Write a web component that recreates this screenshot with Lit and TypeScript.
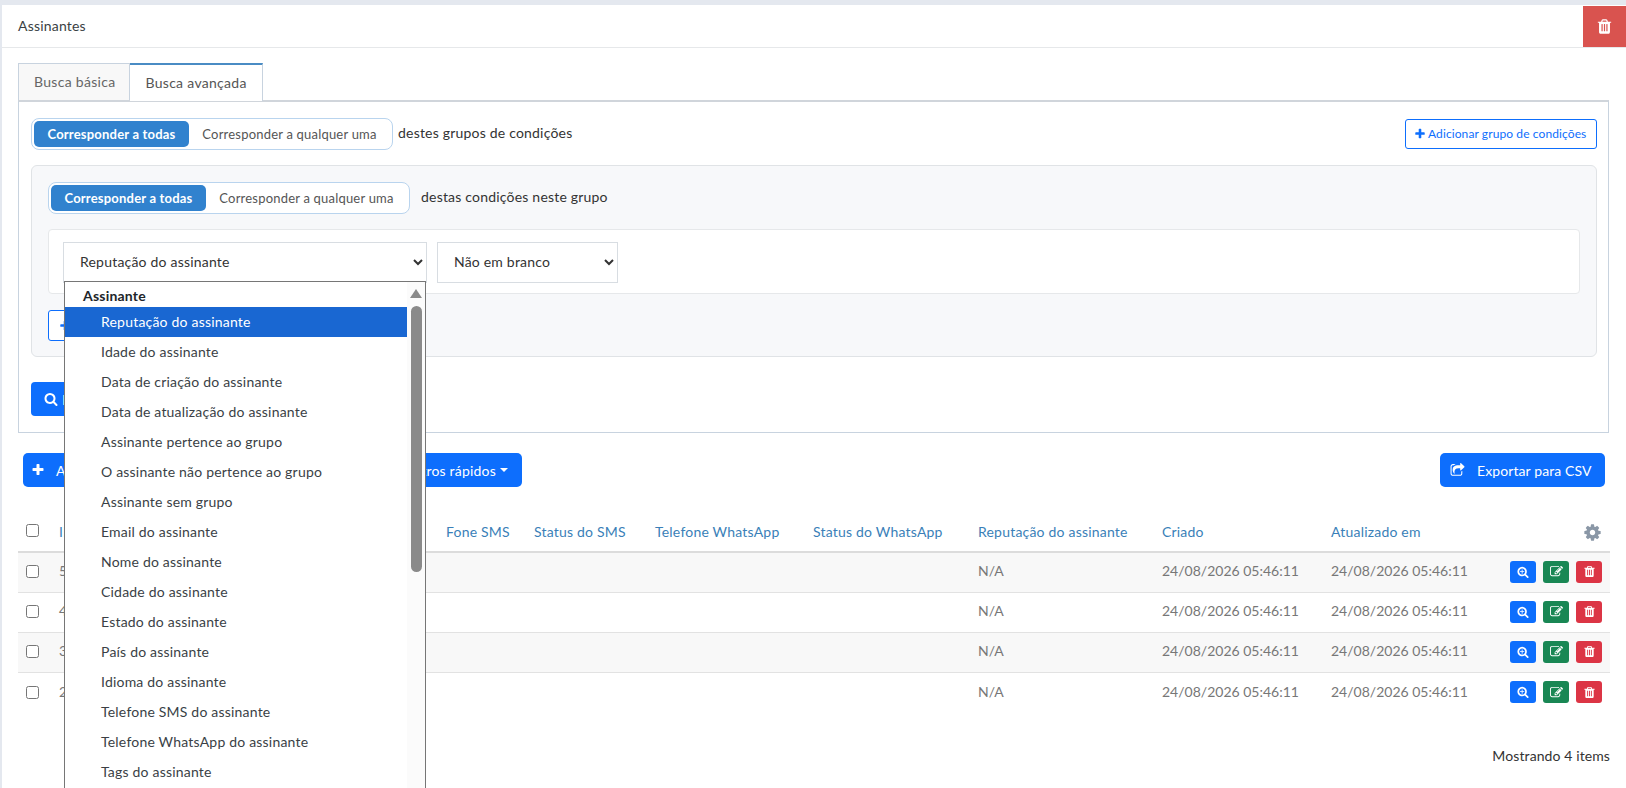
import {LitElement, html, css, svg} from 'lit';
import {customElement} from 'lit/decorators.js';

const ICONS: Record<string, string> = {
  trash: 'M704 1376v-704q0-14-9-23t-23-9h-64q-14 0-23 9t-9 23v704q0 14 9 23t23 9h64q14 0 23-9t9-23zm256 0v-704q0-14-9-23t-23-9h-64q-14 0-23 9t-9 23v704q0 14 9 23t23 9h64q14 0 23-9t9-23zm256 0v-704q0-14-9-23t-23-9h-64q-14 0-23 9t-9 23v704q0 14 9 23t23 9h64q14 0 23-9t9-23zm-544-992h448l-48-117q-7-9-17-11h-317q-10 2-17 11zm928 32v64q0 14-9 23t-23 9h-96v948q0 83-47 143.5t-113 60.5h-832q-66 0-113-58.5t-47-141.5v-952h-96q-14 0-23-9t-9-23v-64q0-14 9-23t23-9h309l70-167q15-37 54-63t79-26h320q40 0 79 26t54 63l70 167h309q14 0 23 9t9 23z',
  search: 'M1216 832q0-185-131.5-316.5t-316.5-131.5-316.5 131.5-131.5 316.5 131.5 316.5 316.5 131.5 316.5-131.5 131.5-316.5zm512 832q0 52-38 90t-90 38q-54 0-90-38l-343-342q-179 124-399 124-143 0-273.5-55.5t-225-150-150-225-55.5-273.5 55.5-273.5 150-225 225-150 273.5-55.5 273.5 55.5 225 150 150 225 55.5 273.5q0 220-124 399l343 343q37 37 37 90z',
  searchPlus: 'M1088 800v64q0 13-9.5 22.5t-22.5 9.5h-224v224q0 13-9.5 22.5t-22.5 9.5h-64q-13 0-22.5-9.5t-9.5-22.5v-224h-224q-13 0-22.5-9.5t-9.5-22.5v-64q0-13 9.5-22.5t22.5-9.5h224v-224q0-13 9.5-22.5t22.5-9.5h64q13 0 22.5 9.5t9.5 22.5v224h224q13 0 22.5 9.5t9.5 22.5zm128 32q0-185-131.5-316.5t-316.5-131.5-316.5 131.5-131.5 316.5 131.5 316.5 316.5 131.5 316.5-131.5 131.5-316.5zm512 832q0 53-37.5 90.5t-90.5 37.5q-54 0-90-38l-343-342q-179 124-399 124-143 0-273.5-55.5t-225-150-150-225-55.5-273.5 55.5-273.5 150-225 225-150 273.5-55.5 273.5 55.5 225 150 150 225 55.5 273.5q0 220-124 399l343 343q37 37 37 90z',
  edit: 'M888 1184l116-116-152-152-116 116v56h96v96h56zm440-720q-16-16-33 1l-350 350q-17 17-1 33t33-1l350-350q17-17 1-33zm80 594v190q0 119-84.5 203.5t-203.5 84.5h-832q-119 0-203.5-84.5t-84.5-203.5v-832q0-119 84.5-203.5t203.5-84.5h832q63 0 117 25 15 7 18 23 3 17-9 29l-49 49q-14 14-32 8-23-6-45-6h-832q-66 0-113 47t-47 113v832q0 66 47 113t113 47h832q66 0 113-47t47-113v-126q0-13 9-22l64-64q15-15 35-7t20 29zm-96-738l288 288-672 672h-288v-288zm444 132l-92 92-288-288 92-92q28-28 68-28t68 28l152 152q28 28 28 68t-28 68z',
  share: 'M1472 989v259q0 119-84.5 203.5t-203.5 84.5h-832q-119 0-203.5-84.5t-84.5-203.5v-832q0-119 84.5-203.5t203.5-84.5h255q13 0 22.5 9.5t9.5 22.5q0 27-26 32-77 26-133 60-10 4-16 4h-112q-66 0-113 47t-47 113v832q0 66 47 113t113 47h832q66 0 113-47t47-113v-214q0-19 18-29 28-13 54-37 16-16 35-8 21 9 21 29zm237-496l-384 384q-18 19-45 19-12 0-25-5-39-17-39-59v-192h-160q-323 0-438 131-119 137-74 473 3 23-20 34-8 2-12 2-16 0-26-13-10-14-21-31t-39.5-68.5-49.5-99.5-38.5-114-17.5-122q0-49 3.5-91t14-90 28-88 47-81.5 68.5-74 94.5-61.5 124.5-48.5 159.5-30.5 196.5-11h160v-192q0-42 39-59 13-5 25-5 26 0 45 19l384 384q19 19 19 45t-19 45z',
  cog: 'M1152 896q0-106-75-181t-181-75-181 75-75 181 75 181 181 75 181-75 75-181zm512-109v222q0 12-8 23t-20 13l-185 28q-19 54-39 91 35 50 107 138 10 12 10 25t-9 23q-27 37-99 108t-94 71q-12 0-26-9l-138-108q-44 23-91 38-16 136-29 186-7 28-36 28h-222q-14 0-24.5-8.5t-11.5-21.5l-28-184q-49-16-90-37l-141 107q-10 9-25 9-14 0-25-11-126-114-165-168-7-10-7-23 0-12 8-23 15-21 51-66.5t54-70.5q-27-50-41-99l-183-27q-13-2-21-12.5t-8-23.5v-222q0-12 8-23t19-13l186-28q14-46 39-92-40-57-107-138-10-12-10-24 0-10 9-23 26-36 98.5-107.5t94.5-71.5q13 0 26 10l138 107q44-23 91-38 16-136 29-186 7-28 36-28h222q14 0 24.5 8.5t11.5 21.5l28 184q49 16 90 37l142-107q9-9 24-9 13 0 25 10 129 119 165 170 7 8 7 22 0 12-8 23-15 21-51 66.5t-54 70.5q26 50 41 98l183 28q13 2 21 12.5t8 23.5z',
  plus: 'M1600 736v192q0 40-28 68t-68 28h-416v416q0 40-28 68t-68 28h-192q-40 0-68-28t-28-68v-416h-416q-40 0-68-28t-28-68v-192q0-40 28-68t68-28h416v-416q0-40 28-68t68-28h192q40 0 68 28t28 68v416h416q40 0 68 28t28 68z',
};

const icon = (name: string, size: number) => html`<svg class="ic" width=${size} height=${size} viewBox="0 0 1792 1792" fill="currentColor">${svg`<path d=${ICONS[name]}></path>`}</svg>`;

const FIELDS = [
  'Reputação do assinante',
  'Idade do assinante',
  'Data de criação do assinante',
  'Data de atualização do assinante',
  'Assinante pertence ao grupo',
  'O assinante não pertence ao grupo',
  'Assinante sem grupo',
  'Email do assinante',
  'Nome do assinante',
  'Cidade do assinante',
  'Estado do assinante',
  'País do assinante',
  'Idioma do assinante',
  'Telefone SMS do assinante',
  'Telefone WhatsApp do assinante',
  'Tags do assinante',
];

const COLUMNS = ['ID', 'Email', 'Nome', 'Fone SMS', 'Status do SMS', 'Telefone WhatsApp', 'Status do WhatsApp', 'Reputação do assinante', 'Criado', 'Atualizado em'];
const ROWS = ['5', '4', '3', '2'];
const STAMP = '24/08/2026 05:46:11';

@customElement('app-root')
export class AppRoot extends LitElement {
  static styles = css`
    :host {
      display: block;
      width: 1626px;
      height: 788px;
      overflow: hidden;
      background: #e4e8ef;
      padding: 5px 0 0 2px;
      box-sizing: border-box;
      font-family: 'Lato', 'Noto Sans', sans-serif;
      font-size: 14px;
      letter-spacing: 0.2px;
      color: #212529;
    }
    .ic { display: block; flex: none; }
    .card { background: #fff; height: 783px; }
    .head {
      display: flex;
      justify-content: space-between;
      height: 41px;
      padding: 1px 0 0 16px;
      border-bottom: 1px solid #e6e8ea;
    }
    .head .title { line-height: 40px; color: #3a3f44; }
    .del-all {
      width: 43px;
      display: flex;
      align-items: center;
      justify-content: center;
      background: #d9534f;
      color: #fff;
    }
    .body { padding: 14px 17px 0 16px; }
    .tabs { display: flex; align-items: flex-end; height: 38px; letter-spacing: 0.3px; }
    .tab {
      box-sizing: border-box;
      height: 37px;
      padding: 0 14px 0 15px;
      line-height: 35px;
      border: 1px solid #c8d3df;
      border-bottom: none;
      background: #f8f8f8;
      color: #666;
    }
    .tab.active {
      height: 38px;
      padding: 0 15px;
      background: #fff;
      border-top: 2px solid #4a8cc4;
      border-left: none;
      color: #555;
      margin-bottom: -1px;
      position: relative;
    }
    .panel {
      border: 1px solid #c8d3df;
      border-top: 2px solid #d0d5db;
      padding: 16px 11px 16px 12px;
      height: 333px;
      box-sizing: border-box;
    }
    .logic { display: flex; align-items: center; }
    .switch {
      display: flex;
      box-sizing: border-box;
      width: 362px;
      height: 32px;
      padding: 2px;
      border: 1px solid #b9d4ee;
      border-radius: 8px;
      background: #fff;
      font-size: 13px;
      letter-spacing: 0.2px;
    }
    .switch span { line-height: 26px; text-align: center; color: #555; flex: 1; }
    .switch .on {
      flex: none;
      width: 155px;
      background: #3182ce;
      color: #fff;
      font-weight: 700;
      border-radius: 5px;
    }
    .logic .label { margin-left: 5px; padding-bottom: 3px; color: #333; }
    .add-group {
      margin-left: auto;
      display: flex;
      align-items: center;
      gap: 2px;
      box-sizing: border-box;
      width: 192px;
      height: 30px;
      margin-top: -1px;
      padding-left: 8px;
      border: 1px solid #0d6efd;
      border-radius: 3px;
      color: #0d6efd;
      font-size: 12px;
      letter-spacing: 0.1px;
      background: #fff;
    }
    .group {
      margin-top: 15px;
      box-sizing: border-box;
      height: 192px;
      padding: 16px 16px 0 16px;
      background: #f7f8fa;
      border: 1px solid #e0e3e6;
      border-radius: 6px;
    }
    .group .label { margin-left: 11px; }
    .cond {
      margin-top: 15px;
      box-sizing: border-box;
      height: 65px;
      padding: 12px 15px 12px 14px;
      display: flex;
      gap: 10px;
      align-items: flex-start;
      background: #fff;
      border: 1px solid #e6e8ea;
      border-radius: 4px;
    }
    .field { position: relative; }
    select {
      display: block;
      box-sizing: border-box;
      height: 41px;
      padding: 0 12px 2px;
      border: 1px solid #d8dde2;
      background-color: #fff;
      font: inherit;
      letter-spacing: inherit;
      color: #333;
    }
    .sel-a { width: 364px; }
    .sel-b { width: 181px; }
    .add-cond {
      margin-top: 16px;
      box-sizing: border-box;
      width: 170px;
      height: 31px;
      padding-left: 10px;
      display: flex;
      align-items: center;
      gap: 3px;
      border: 1px solid #0d6efd;
      border-radius: 3px;
      color: #0d6efd;
      background: #fff;
      font-size: 12px;
    }
    .search {
      margin-top: 25px;
      box-sizing: border-box;
      width: 120px;
      height: 34px;
      padding-left: 13px;
      display: flex;
      align-items: center;
      gap: 4px;
      border-radius: 4px;
      background: #0d6efd;
      color: #fff;
    }
    .list {
      position: absolute;
      left: 1px;
      top: 39px;
      width: 362px;
      height: 520px;
      box-sizing: border-box;
      display: flex;
      background: #fff;
      border: 1px solid #767676;
      z-index: 10;
    }
    .options { width: 342px; }
    .optgroup { height: 25px; line-height: 27px; padding-left: 18px; font-weight: 700; color: #212529; }
    .option { height: 30px; line-height: 30px; padding-left: 36px; color: #3a3f46; }
    .option.sel { background: #1967d2; color: #fff; }
    .track { width: 18px; background: #fbfbfb; position: relative; flex: none; }
    .arrow {
      position: absolute;
      left: 3px;
      top: 7px;
      border-left: 6px solid transparent;
      border-right: 6px solid transparent;
      border-bottom: 9px solid #8a8a8a;
    }
    .thumb {
      position: absolute;
      left: 4px;
      top: 24px;
      width: 11px;
      height: 266px;
      border-radius: 6px;
      background: #8a8a8a;
    }
    .toolbar { display: flex; align-items: center; margin-top: 20px; padding: 0 4px 0 5px; }
    .btn {
      box-sizing: border-box;
      height: 34px;
      display: flex;
      align-items: center;
      border-radius: 5px;
      background: #0d6efd;
      color: #fff;
    }
    .btn-add { width: 280px; padding-left: 8px; gap: 11px; }
    .btn-filter { width: 215px; margin-left: 4px; justify-content: flex-end; padding-right: 14px; gap: 4px; }
    .caret {
      border-top: 4px solid #fff;
      border-left: 4px solid transparent;
      border-right: 4px solid transparent;
    }
    .btn-export { margin-left: auto; width: 165px; padding-left: 10px; gap: 12px; letter-spacing: 0.1px; }
    table {
      margin-top: 20px;
      width: 1592px;
      border-collapse: separate;
      border-spacing: 0;
      table-layout: fixed;
      font-size: 14px;
    }
    th {
      height: 46px;
      box-sizing: border-box;
      padding: 4px 8px 0;
      text-align: left;
      font-weight: 400;
      color: #3a7fb8;
      border-bottom: 2px solid #dcdcdc;
      white-space: nowrap;
    }
    td {
      height: 40px;
      box-sizing: border-box;
      padding: 0 8px 4px;
      color: #777;
      letter-spacing: 0;
      border-bottom: 1px solid #e2e2e2;
      white-space: nowrap;
    }
    td.check, td.acts { padding-bottom: 2px; }
    tbody tr:nth-child(odd) td { background: #f8f8f8; }
    tbody tr:last-child td { border-bottom: none; }
    input[type='checkbox'] {
      display: block;
      margin: 0;
      width: 13px;
      height: 13px;
    }
    th.check { padding-top: 2px; }
    .tools { display: flex; justify-content: flex-end; }
    .gear { color: #8a97a6; margin-top: 3px; }
    .actions { display: flex; justify-content: flex-end; gap: 7px; }
    .act {
      width: 26px;
      height: 22px;
      display: flex;
      align-items: center;
      justify-content: center;
      border-radius: 3px;
      color: #fff;
    }
    .act.view { background: #0d6efd; }
    .act.edit { background: #198754; }
    .act.drop { background: #dc3545; }
    .foot { margin-top: 34px; text-align: right; width: 1592px; color: #333; letter-spacing: 0.1px; }
  `;

  render() {
    const widths = [33, 60, 190, 137, 88, 121, 158, 165, 184, 169, 177, 110];
    return html`
      <div class="card">
        <div class="head">
          <div class="title">Assinantes</div>
          <div class="del-all">${icon('trash', 17)}</div>
        </div>
        <div class="body">
          <div class="tabs">
            <div class="tab">Busca básica</div>
            <div class="tab active">Busca avançada</div>
          </div>
          <div class="panel">
            <div class="logic">
              <div class="switch"><span class="on">Corresponder a todas</span><span>Corresponder a qualquer uma</span></div>
              <span class="label">destes grupos de condições</span>
              <div class="add-group">${icon('plus', 12)}Adicionar grupo de condições</div>
            </div>
            <div class="group">
              <div class="logic">
                <div class="switch"><span class="on">Corresponder a todas</span><span>Corresponder a qualquer uma</span></div>
                <span class="label">destas condições neste grupo</span>
              </div>
              <div class="cond">
                <div class="field">
                  <select class="sel-a"><option>Reputação do assinante</option></select>
                  <div class="list">
                    <div class="options">
                      <div class="optgroup">Assinante</div>
                      ${FIELDS.map((f, i) => html`<div class="option ${i === 0 ? 'sel' : ''}">${f}</div>`)}
                    </div>
                    <div class="track"><div class="arrow"></div><div class="thumb"></div></div>
                  </div>
                </div>
                <select class="sel-b"><option>Não em branco</option></select>
              </div>
              <div class="add-cond">${icon('plus', 12)}Adicionar condição</div>
            </div>
            <div class="search">${icon('search', 14)}Buscar</div>
          </div>
          <div class="toolbar">
            <div class="btn btn-add">${icon('plus', 14)}Adicionar assinante</div>
            <div class="btn btn-filter">Filtros rápidos<span class="caret"></span></div>
            <div class="btn btn-export">${icon('share', 15)}Exportar para CSV</div>
          </div>
          <table>
            <colgroup>${widths.map((w) => html`<col style="width:${w}px" />`)}</colgroup>
            <thead>
              <tr>
                <th class="check"><input type="checkbox" /></th>
                ${COLUMNS.map((c) => html`<th>${c}</th>`)}
                <th><div class="tools"><span class="gear">${icon('cog', 19)}</span></div></th>
              </tr>
            </thead>
            <tbody>
              ${ROWS.map((id) => html`
                <tr>
                  <td class="check"><input type="checkbox" /></td>
                  <td>${id}</td>
                  <td></td><td></td><td></td><td></td><td></td><td></td>
                  <td>N/A</td>
                  <td>${STAMP}</td>
                  <td>${STAMP}</td>
                  <td class="acts">
                    <div class="actions">
                      <span class="act view">${icon('searchPlus', 12)}</span>
                      <span class="act edit">${icon('edit', 13)}</span>
                      <span class="act drop">${icon('trash', 13)}</span>
                    </div>
                  </td>
                </tr>
              `)}
            </tbody>
          </table>
          <div class="foot">Mostrando 4 items</div>
        </div>
      </div>
    `;
  }
}
